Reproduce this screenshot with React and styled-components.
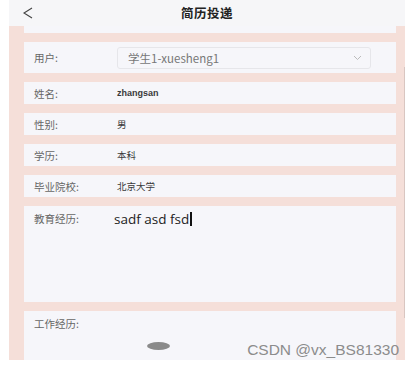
import React from 'react'
import styled, { createGlobalStyle } from 'styled-components'

const Global = createGlobalStyle`
  body {
    margin: 0;
    background: #fff;
    font-family: "Noto Sans CJK SC", "Liberation Sans", sans-serif;
  }
`

const rows = [
    { label: '姓名:', value: 'zhangsan', latin: true },
    { label: '性别:', value: '男' },
    { label: '学历:', value: '本科' },
    { label: '毕业院校:', value: '北京大学' },
]

const App = () => {
    return (
        <>
            <Global />
            <Screen>
                <Phone>
                    <Header>
                        <Back>
                            <svg width="12" height="12" viewBox="0 0 12 12">
                                <polyline points="10,1 2,6 10,11" fill="none" stroke="#444" strokeWidth="1.1" />
                            </svg>
                        </Back>
                        <Title>简历投递</Title>
                    </Header>
                    <Body>
                        <Card $h={7} />
                        <Card $h={31}>
                            <Label>用户:</Label>
                            <Select>
                                <span>学生1-xuesheng1</span>
                                <svg width="9" height="6" viewBox="0 0 9 6">
                                    <polyline points="1,1 4.5,4.5 8,1" fill="none" stroke="#bbb" strokeWidth="1" />
                                </svg>
                            </Select>
                        </Card>
                        {rows.map((r) => (
                            <Card key={r.label} $h={22}>
                                <Label>{r.label}</Label>
                                <Value $latin={r.latin}>{r.value}</Value>
                            </Card>
                        ))}
                        <Card $h={96} $top>
                            <Label>教育经历:</Label>
                            <TextValue>sadf asd fsd<Caret /></TextValue>
                        </Card>
                        <Card $h={60} $top>
                            <Label>工作经历:</Label>
                        </Card>
                        <Scroll />
                        <Dot />
                        <Mark>CSDN @vx_BS81330</Mark>
                    </Body>
                </Phone>
            </Screen>
        </>
    )
}
export default App

const Screen = styled.div`
    width: 412px;
    height: 367px;
    overflow: hidden;
    background: #fff;
`
const Phone = styled.div`
    margin-left: 9px;
    width: 396px;
    display: flex;
    flex-direction: column;
`
const Header = styled.div`
    height: 26px;
    background: #f6f6f8;
    display: flex;
    align-items: center;
    justify-content: center;
    position: relative;
`
const Back = styled.div`
    position: absolute;
    left: 13px;
    top: 7px;
    display: flex;
`
const Title = styled.div`
    font-size: 12.5px;
    font-weight: 700;
    color: #222;
    letter-spacing: 0.5px;
    margin-top: -2px;
`
const Body = styled.div`
    position: relative;
    height: 334px;
    overflow: hidden;
    background: #f5dfd9;
    padding: 0 9px 0 15px;
    display: flex;
    flex-direction: column;
    gap: 9px;
`
const Card = styled.div`
    flex: none;
    height: ${(p) => p.$h}px;
    background: #f6f6fa;
    display: flex;
    align-items: ${(p) => (p.$top ? 'flex-start' : 'center')};
    padding: ${(p) => (p.$top ? '5px 10px 0' : '0 10px')};
    box-sizing: border-box;
`
const Label = styled.div`
    width: 83px;
    flex: none;
    font-size: 10.5px;
    color: #666;
`
const Value = styled.div`
    font-size: ${(p) => (p.$latin ? '9px' : '9.5px')};
    font-family: ${(p) => (p.$latin ? '"Liberation Sans", sans-serif' : 'inherit')};
    font-weight: ${(p) => (p.$latin ? 700 : 400)};
    color: #3a3a3a;
`
const Select = styled.div`
    width: 254px;
    height: 22px;
    box-sizing: border-box;
    border: 1px solid #e6e6ea;
    border-radius: 3px;
    display: flex;
    align-items: center;
    justify-content: space-between;
    padding: 0 8px 0 10px;
    font-size: 11.5px;
    color: #777;
`
const TextValue = styled.div`
    margin-left: -3px;
    margin-top: -1px;
    font-family: "Open Sans", "Liberation Sans", sans-serif;
    font-size: 13.5px;
    color: #222;
    display: flex;
    align-items: center;
`
const Caret = styled.span`
    display: inline-block;
    width: 1.5px;
    height: 14px;
    background: #111;
    margin-left: 1px;
`
const Scroll = styled.div`
    position: absolute;
    right: 0;
    top: 41px;
    width: 1px;
    height: 251px;
    background: #d9c6c1;
`
const Dot = styled.div`
    position: absolute;
    left: 138px;
    top: 316px;
    width: 23px;
    height: 8px;
    border-radius: 50%;
    background: #8a8a8a;
`
const Mark = styled.div`
    position: absolute;
    right: 6px;
    top: 315px;
    font-family: "Liberation Sans", sans-serif;
    font-size: 15.5px;
    color: #8c8c8c;
    white-space: nowrap;
`
